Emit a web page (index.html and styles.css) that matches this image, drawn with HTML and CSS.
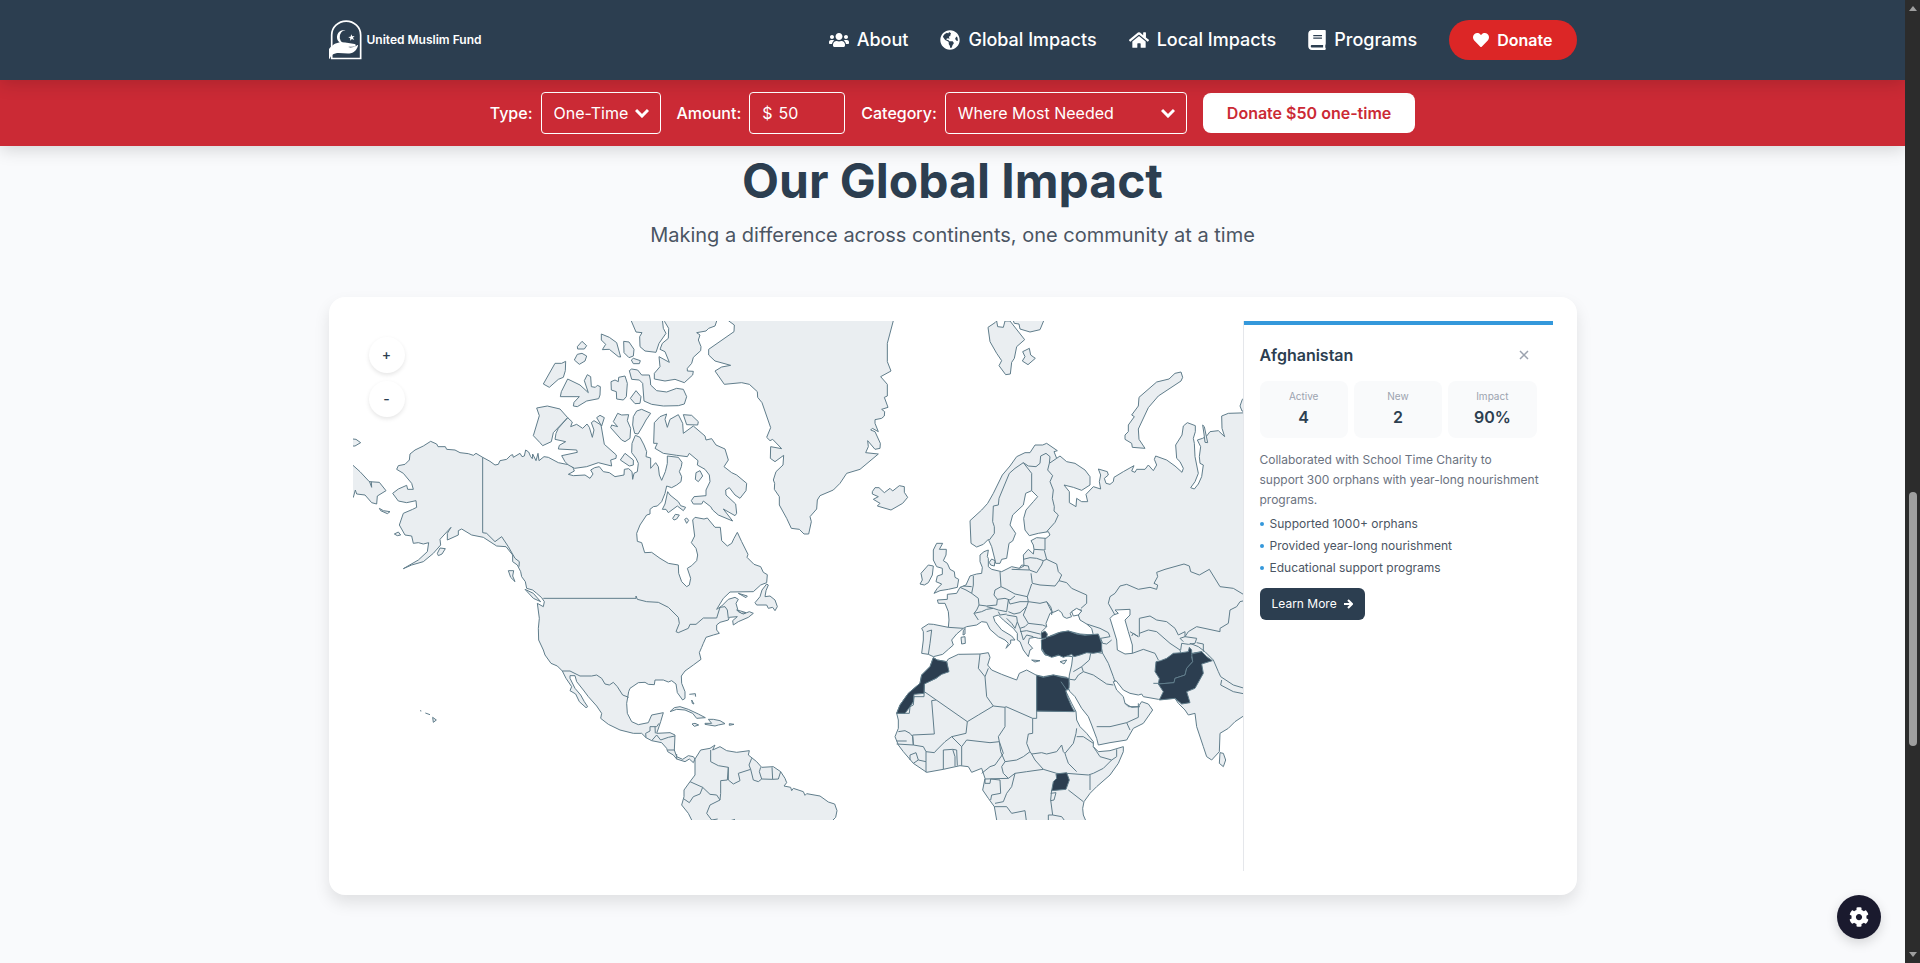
FILE: index.html
```html
<!DOCTYPE html>
<html lang="en">
<head>
    <meta charset="UTF-8">
    <meta name="viewport" content="width=device-width, initial-scale=1.0">
    <title>United Muslim Fund - Our Global Impact</title>
    <link rel="stylesheet" href="styles.css">
</head>
<body>
    <div class="page">
        <header class="site-header">
            <div class="container header-inner">
                <a class="logo" href="#">
                    <svg viewBox="0 0 98 118" aria-hidden="true">
                        <path d="M8 84V44a43 41 0 0 1 86 0v70H8V96" fill="none" stroke="#fff" stroke-width="5"/>
                        <path d="M50 30a21 21 0 1 0 6 38 17 20 0 1 1-6-38z" fill="#fff"/>
                        <path d="M66 42l3 6 7-1-5 5 4 7-7-3-5 5v-7l-6-4 7-1z" fill="#fff"/>
                        <path d="M0 86C12 72 22 66 38 66c14 0 26 4 38 5 5 1 5 7-1 7-8 1-15 0-18 2 8 3 17 0 23-3 4-3 7-5 6-1-3 12-12 22-26 23-18 1-38-6-50 4-5 4-7 9-8 12H0z" fill="#fff"/>
                    </svg>
                    <span>United Muslim Fund</span>
                </a>
                <nav class="main-nav">
                    <a href="#"><svg class="nav-icon" viewBox="0 0 640 512" aria-hidden="true"><path d="M96 224c35.3 0 64-28.7 64-64s-28.7-64-64-64-64 28.7-64 64 28.7 64 64 64zm448 0c35.3 0 64-28.7 64-64s-28.7-64-64-64-64 28.7-64 64 28.7 64 64 64zm32 32h-64c-17.6 0-33.5 7.1-45.1 18.6 40.3 22.1 68.9 62 75.1 109.4h66c17.7 0 32-14.3 32-32v-32c0-35.3-28.7-64-64-64zm-256 0c61.9 0 112-50.1 112-112S381.9 32 320 32 208 82.1 208 144s50.1 112 112 112zm76.8 32h-8.3c-20.8 10-43.9 16-68.5 16s-47.6-6-68.5-16h-8.3C179.6 288 128 339.6 128 403.2V432c0 26.5 21.5 48 48 48h288c26.5 0 48-21.5 48-48v-28.8c0-63.6-51.6-115.2-115.2-115.2zm-223.7-13.4C161.5 263.1 145.6 256 128 256H64c-35.3 0-64 28.7-64 64v32c0 17.7 14.3 32 32 32h65.9c6.3-47.4 34.9-87.3 75.2-109.4z"/></svg>About</a>
                    <a href="#"><svg class="nav-icon" viewBox="0 0 496 512" aria-hidden="true"><path d="M248 8C111.03 8 0 119.03 0 256s111.03 248 248 248 248-111.03 248-248S384.97 8 248 8zm82.29 357.6c-3.9 3.88-7.99 7.95-11.31 11.28-2.99 3-5.1 6.7-6.17 10.71-1.51 5.66-2.73 11.38-4.77 16.87l-17.39 46.85c-13.76 3-28 4.69-42.65 4.69v-27.38c1.69-12.62-7.64-36.26-22.63-51.25-6-6-9.37-14.14-9.37-22.63v-32.01c0-11.64-6.27-22.34-16.46-27.97-14.37-7.95-34.81-19.06-48.81-26.11-11.48-5.78-22.1-13.14-31.65-21.75l-.8-.72a114.792 114.792 0 0 1-18.06-20.74c-9.38-13.77-24.66-36.42-34.59-51.14 20.47-45.5 57.36-82.04 103.2-101.89l24.01 12.01C203.48 89.74 216 82.01 216 70.11v-11.3c7.99-1.29 16.12-2.11 24.39-2.42l28.3 28.3c6.25 6.25 6.25 16.38 0 22.63L264 112l-10.34 10.34c-3.12 3.12-3.12 8.19 0 11.31l4.69 4.69c3.12 3.12 3.12 8.19 0 11.31l-8 8a8.008 8.008 0 0 1-5.66 2.34h-8.99c-2.08 0-4.08.81-5.58 2.27l-9.92 9.65a8.008 8.008 0 0 0-1.58 9.31l15.59 31.19c2.66 5.32-1.21 11.58-7.15 11.58h-5.64c-1.93 0-3.79-.7-5.24-1.96l-9.28-8.06a16.017 16.017 0 0 0-15.55-3.1l-31.17 10.39a11.95 11.95 0 0 0-8.17 11.34c0 4.53 2.56 8.66 6.61 10.69l11.08 5.54c9.41 4.71 19.79 7.16 30.31 7.16s22.59 27.29 32 32h66.75c8.49 0 16.62 3.37 22.63 9.37l13.69 13.69a30.503 30.503 0 0 1 8.93 21.57 46.536 46.536 0 0 1-13.72 32.98zM417 274.25c-5.79-1.45-10.84-5-14.15-9.97l-17.98-26.97a23.97 23.97 0 0 1 0-26.62l19.59-29.38c2.32-3.47 5.5-6.29 9.24-8.15l12.98-6.49C440.2 193.59 448 223.87 448 256c0 8.67-.74 17.16-1.82 25.54L417 274.25z"/></svg>Global Impacts</a>
                    <a href="#"><svg class="nav-icon" viewBox="0 0 576 512" aria-hidden="true"><path d="M280.37 148.26L96 300.11V464a16 16 0 0 0 16 16l112.06-.29a16 16 0 0 0 15.92-16V368a16 16 0 0 1 16-16h64a16 16 0 0 1 16 16v95.64a16 16 0 0 0 16 16.05L464 480a16 16 0 0 0 16-16V300L295.67 148.26a12.19 12.19 0 0 0-15.3 0zM571.6 251.47L488 182.56V44.05a12 12 0 0 0-12-12h-56a12 12 0 0 0-12 12v72.61L318.47 43a48 48 0 0 0-61 0L4.34 251.47a12 12 0 0 0-1.6 16.9l25.5 31A12 12 0 0 0 45.15 301l235.22-193.74a12.19 12.19 0 0 1 15.3 0L530.9 301a12 12 0 0 0 16.9-1.6l25.5-31a12 12 0 0 0-1.7-16.93z"/></svg>Local Impacts</a>
                    <a href="#"><svg class="nav-icon book" viewBox="0 0 448 512" aria-hidden="true"><path d="M448 360V24c0-13.3-10.7-24-24-24H96C43 0 0 43 0 96v320c0 53 43 96 96 96h328c13.3 0 24-10.7 24-24v-16c0-7.5-3.5-14.3-8.9-18.7-4.2-15.4-4.2-59.3 0-74.7 5.4-4.3 8.9-11.1 8.9-18.6zM128 134c0-3.3 2.7-6 6-6h212c3.3 0 6 2.7 6 6v20c0 3.3-2.7 6-6 6H134c-3.3 0-6-2.7-6-6v-20zm0 64c0-3.3 2.7-6 6-6h212c3.3 0 6 2.7 6 6v20c0 3.3-2.7 6-6 6H134c-3.3 0-6-2.7-6-6v-20zm253.4 250H96c-17.7 0-32-14.3-32-32 0-17.6 14.4-32 32-32h285.4c-1.9 17.1-1.9 46.9 0 64z"/></svg>Programs</a>
                    <a class="donate-link" href="#"><svg viewBox="0 0 512 512" aria-hidden="true"><path d="M462.3 62.6C407.5 15.9 326 24.3 275.7 76.2L256 96.5l-19.7-20.3C186.1 24.3 104.5 15.9 49.7 62.6c-62.8 53.6-66.1 149.8-9.9 207.9l193.5 199.8c12.5 12.9 32.8 12.9 45.3 0l193.5-199.8c56.3-58.1 53-154.3-9.8-207.9z"/></svg>Donate</a>
                </nav>
            </div>
        </header>

        <form class="donate-bar">
            <div class="field">
                <label for="type">Type:</label>
                <div class="select-wrap type-wrap">
                    <select id="type">
                        <option>One-Time</option>
                        <option>Monthly</option>
                    </select>
                    <svg viewBox="0 0 14 10" aria-hidden="true"><path d="M1 2l6 6 6-6"/></svg>
                </div>
            </div>
            <div class="field">
                <label for="amount">Amount:</label>
                <div class="amount-wrap">
                    <span>$</span>
                    <input type="text" id="amount" value="50">
                </div>
            </div>
            <div class="field">
                <label for="category">Category:</label>
                <div class="select-wrap category-wrap">
                    <select id="category">
                        <option>Where Most Needed</option>
                        <option>Orphans</option>
                    </select>
                    <svg viewBox="0 0 14 10" aria-hidden="true"><path d="M1 2l6 6 6-6"/></svg>
                </div>
            </div>
            <button type="submit" class="donate-submit">Donate $50 one-time</button>
        </form>

        <main class="container impact">
            <h1>Our Global Impact</h1>
            <p class="subtitle">Making a difference across continents, one community at a time</p>

            <section class="map-card">
                <div class="map">
                    <svg class="world" viewBox="0 0 2670 1497" role="img" aria-label="World map">
                        <!-- Americas -->
                        <g transform="translate(-39 -63)">
                            <path d="M272 424L290 432 294 440 316 440 320 448 345 450 360 458 385 461 400 466 408 460 428 472 450 484 465 495 475 493 480 482 500 478 512 466 518 464 520 472 540 460 546 470 553 468 557 450 566 456 572 470 577 476 578 462 588 482 594 460 597 482 612 470 625 472 655 488 690 495 700 505 703 513 685 523 700 527 735 525 750 535 759 522 752 510 764 503 778 500 790 515 808 518 825 530 852 525 853 508 866 506 876 515 878 538 882 520 892 515 895 490 888 475 875 458 876 430 886 406 900 412 912 435 920 455 918 470 932 474 932 505 947 488 955 500 958 525 965 541 976 515 982 490 982 468 1015 472 1026 487 1024 500 1018 515 1025 530 1023 545 1010 555 995 563 980 558 975 580 965 605 952 618 940 620 930 628 930 642 920 645 900 675 890 700 892 724 905 728 914 758 935 757 960 775 985 790 1015 795 1016 820 1025 845 1040 860 1048 855 1052 835 1042 805 1055 797 1070 782 1073 765 1068 745 1054 728 1064 708 1058 660 1065 652 1092 657 1102 654 1125 682 1141 682 1145 722 1162 738 1175 730 1182 715 1192 697 1205 725 1224 763 1221 772 1242 793 1262 800 1270 817 1282 824 1280 848 1262 855 1240 875 1170 876 1150 895 1130 928 1145 918 1165 898 1185 892 1195 898 1188 910 1195 935 1210 942 1228 935 1240 940 1225 952 1195 965 1180 975 1178 962 1192 950 1168 952 1165 960 1140 967 1130 975 1130 990 1138 1000 1120 1005 1098 1012 1090 1030 1085 1042 1078 1058 1083 1078 1060 1095 1035 1113 1024 1128 1025 1150 1035 1175 1035 1195 1028 1200 1012 1178 1008 1152 995 1142 985 1146 970 1140 945 1140 943 1154 925 1153 915 1147 895 1148 870 1165 866 1175 860 1210 862 1240 875 1265 895 1274 925 1268 935 1245 970 1238 962 1265 957 1280 950 1300 990 1298 1005 1305 1003 1350 1010 1370 1028 1378 1045 1367 1060 1370 1065 1377 1060 1388 1048 1377 1035 1385 1010 1377 1000 1365 983 1355 980 1345 965 1328 935 1322 918 1313 905 1300 880 1300 840 1290 805 1273 782 1255 785 1240 770 1218 745 1190 730 1170 710 1145 705 1127 690 1127 690 1135 705 1165 722 1185 733 1205 743 1220 738 1223 718 1205 707 1182 690 1172 695 1160 678 1135 667 1113 652 1098 633 1090 615 1065 610 1050 596 1020 595 985 598 955 592 910 610 920 613 905 605 893 590 880 578 870 560 865 556 845 545 830 542 815 532 795 518 785 518 765 498 740 470 738 430 712 395 705 365 687 355 692 355 705 322 720 322 700 333 682 300 718 302 735 280 760 250 785 215 795 190 806 235 780 262 755 266 728 250 732 235 728 220 730 215 708 195 705 178 675 190 640 218 628 230 622 228 602 200 608 175 603 158 580 175 567 200 556 203 568 220 568 215 550 190 520 170 508 175 497 195 493 208 480 210 462 225 450 250 438Z"/>
                            <!-- Siberian tip, Aleutians, Hawaii -->
                            <path d="M20 480L39 496 60 515 88 545 118 547 138 572 112 588 110 612 95 608 75 585 50 582 46 570 40 592 20 590ZM20 415L48 418 62 428 45 438 20 438ZM88 543L95 562 94 545M118 625L130 632 150 635 142 641 122 632ZM163 702L175 696 182 705 172 707ZM292 760L300 744 316 746 306 762 295 767ZM505 812L521 812 518 828 525 845 512 832ZM555 868L580 880 602 905 580 895ZM240 1232l4 1M256 1239l14 5M278 1252L289 1260 280 1267Z"/>
                            <!-- Arctic islands -->
                            <path d="M712 140L726 124 740 137 733 147 713 147ZM703 180L712 163 726 160 740 168 735 183 718 193ZM677 184L676 212 670 232 655 238 628 262 610 252 645 190 665 190ZM784 102L808 112 830 128 842 171 835 170 808 148 787 149 797 133 784 120ZM851 124L867 126 882 148 880 168 867 173 852 158ZM874 180L880 175 901 182 898 191 880 191ZM683 237L720 255 745 278 733 242 742 224 752 230 754 260 766 262 772 256 781 260 780 285 776 296 740 303 712 320 700 318 702 307 718 290 661 290 664 275ZM813 245L825 240 835 245 836 232 855 228 862 250 859 290 850 300 830 297 829 275 814 270ZM868 212L875 207 893 210 905 225 928 225 931 240 932 255 950 272 980 276 1010 265 1030 268 1040 290 1033 312 1015 317 970 318 935 313 912 303 908 250 898 240 875 238ZM871 295L888 272 903 290 900 310 885 311ZM590 324L622 318 660 327 683 353 640 398 634 425 608 437 600 428 580 407 598 347ZM683 353L697 366 692 380 710 373 728 385 741 372 748 382 757 412 762 390 754 368 762 362 783 375 793 433 829 465 828 475 812 480 815 498 775 488 740 500 704 505 685 495 675 485 665 467 712 457 710 450 655 447 658 436 677 425 645 418 648 400 655 385ZM770 353L780 346 793 353 785 378ZM820 365L833 340 845 345 866 344 862 362 872 385 870 415 855 425 845 420 812 383 815 375 833 380ZM890 333L905 328 932 340 918 360 910 375 894 402 884 400 878 375 880 350ZM841 480L855 460 880 480 880 495 868 498ZM874 63L888 96 906 98 899 110 900 140 915 153 948 157 957 130 978 100 970 85 965 40 870 40ZM972 40L974 65 986 85 985 115 967 130 960 148 975 155 988 187 957 170 960 200 943 220 943 237 975 243 1005 238 1033 248 1058 225 1060 214 1042 213 1042 205 1055 190 1060 172 1082 152 1083 140 1075 120 1080 105 1070 98 1098 93 1106 85 1125 78 1131 60 1131 40ZM941 430L943 368 960 350 980 342 975 358 982 382 990 358 1015 344 1028 370 1030 400 1060 378 1095 408 1098 420 1115 416 1128 435 1155 447 1165 480 1152 500 1175 518 1190 525 1220 550 1218 572 1200 595 1185 585 1168 563 1157 570 1158 585 1187 612 1190 640 1185 647 1150 627 1178 663 1135 645 1118 630 1112 620 1090 603 1085 612 1060 612 1054 602 1062 590 1098 587 1098 570 1110 545 1108 525 1095 508 1072 495 1074 482 1048 460 1042 470 1010 466 970 460 945 445 952 430ZM1030 344L1055 346 1075 365 1073 375 1040 374ZM1068 518L1080 512 1088 528 1075 545 1066 538ZM983 575L990 585 1015 605 1022 617 1037 622 1030 632 1012 618 985 638 978 628 967 628 975 612ZM998 655L1006 643 1018 645 1010 657 1002 660ZM1034 658L1040 654 1046 661 1040 670Z"/>
                            <!-- Newfoundland, Greenland -->
                            <path d="M1280 852L1285 855 1278 872 1275 890 1290 888 1305 900 1312 920 1305 932 1298 922 1285 925 1280 915 1250 915 1245 908 1260 890 1266 870ZM1195 880L1222 888 1218 893ZM1190 930L1205 940 1218 938 1202 933Z"/>
                            <path d="M1165 40L1165 62 1183 75 1182 95 1106 148 1106 165 1125 183 1172 196 1145 201 1125 213 1153 253 1205 248 1228 253 1252 275 1253 292 1266 308 1292 383 1280 412 1290 422 1298 418 1325 446 1292 440 1291 475 1305 485 1331 466 1329 495 1308 515 1300 540 1304 550 1303 568 1318 590 1318 615 1340 655 1354 685 1378 688 1392 702 1406 702 1414 665 1410 650 1430 627 1432 600 1440 587 1480 570 1500 550 1520 520 1560 508 1615 462 1577 458 1585 440 1583 422 1605 448 1620 445 1621 430 1605 395 1592 390 1597 385 1615 395 1605 370 1605 359 1625 355 1633 348 1634 335 1625 328 1644 322 1633 292 1642 288 1642 253 1622 230 1653 213 1642 185 1642 130 1660 62 1664 40Z"/>
                            <!-- Caribbean -->
                            <path d="M990 1235L1003 1223 1020 1220 1045 1228 1075 1242 1096 1253 1070 1255 1058 1240 1035 1230 1010 1228ZM1048 1183L1066 1181 1067 1190M1055 1200L1062 1212 1057 1210ZM1056 1272L1065 1270 1076 1275 1063 1279ZM1095 1270L1115 1270 1105 1258 1120 1258 1140 1262 1155 1271 1135 1275 1125 1278 1095 1273ZM1168 1271L1182 1273 1168 1276Z"/>
                            <!-- South America -->
                            <path d="M1065 1377L1082 1350 1110 1345 1125 1335 1118 1350 1140 1340 1160 1352 1190 1357 1228 1352 1225 1365 1250 1385 1265 1402 1300 1400 1322 1415 1335 1435 1340 1448 1332 1458 1352 1462 1355 1472 1360 1465 1390 1475 1395 1486 1400 1481 1440 1488 1465 1506 1484 1512 1491 1532 1487 1552 1475 1564 1470 1600 1060 1600 1055 1560 1045 1540 1025 1515 1032 1490 1032 1470 1050 1445 1065 1425Z"/>
                            <!-- borders -->
                            <path class="border" d="M428 472L428 698 440 700 465 725 485 710 505 740 525 775 538 785 537 800M610 895L888 895 888 888 892 898 920 905 955 907 985 922 1015 952 1018 970 1008 995 1015 998 1045 985 1050 973 1068 973 1090 954 1130 954 1140 922 1155 920 1162 930 1165 955M667 1113L690 1113 720 1128 755 1128 770 1125 785 1135 795 1152 808 1155 820 1147 832 1160 848 1185 866 1192M918 1313L917 1300 930 1293 930 1280 950 1280 957 1270M945 1280L946 1300M935 1322L950 1305 962 1320 985 1312 1005 1308M983 1350L1003 1350M1010 1378L1010 1362M1112 1350L1112 1385 1135 1397 1165 1402 1162 1440 1142 1442 1142 1480 1140 1500 1130 1485 1110 1483 1088 1462 1050 1445M1088 1462L1080 1482 1060 1490 1048 1508 1032 1497M1165 1402L1165 1440 1180 1452 1200 1442 1195 1420 1232 1408 1227 1395 1235 1375M1232 1408L1240 1440 1255 1445 1265 1437 1258 1415 1262 1402M1265 1437L1298 1438 1296 1402M1298 1438L1315 1437 1322 1415M1140 1500L1110 1515 1100 1540 1115 1560 1133 1557M1168 1563L1185 1558"/>
                        </g>
                        <!-- Europe and Asia -->
                        <g transform="translate(1521 -33)">
                            <path d="M1170 308L1105 310 1085 318 1086 355 1094 380 1075 362 1050 365 1040 378 1028 385 1012 390 1022 410 1018 440 1020 460 1030 465 1025 500 1015 522 1003 537 992 533 1005 515 1015 490 1010 465 1005 440 1003 400 1000 385 1006 365 1006 347 982 338 970 348 966 375 947 405 950 445 960 455 970 475 966 487 945 468 920 450 887 438 883 448 890 465 880 482 865 465 855 478 830 478 825 487 815 483 822 467 790 485 762 502 760 515 750 523 738 520 733 505 745 495 742 485 715 477 722 495 718 515 722 537 700 530 678 553 683 575 665 575 650 565 648 590 628 578 628 545 612 525 640 532 665 541 690 525 690 500 675 480 645 460 620 455 600 438 590 445 582 425 592 422 560 400 548 405 525 405 510 428 495 428 470 440 450 468 427 495 400 550 383 580 365 600 330 632 333 700 350 711 370 703 385 688 395 710 405 750 407 760 420 760 425 748 440 745 447 700 458 693 467 670 450 645 458 615 490 585 497 550 515 542 533 560 520 575 498 600 491 625 495 660 508 677 535 670 565 665 570 675 558 685 530 683 513 692 520 705 522 718 520 732 505 718 490 735 492 768 478 775 455 770 425 785 395 778 385 770 385 745 382 740 385 720 372 725 360 735 360 755 367 772 365 790 350 792 330 798 318 825 300 832 290 850 262 853 262 868 232 870 235 880 255 880 265 905 267 930 265 952 220 943 205 942 185 955 190 965 190 990 185 1030 205 1033 220 1040 248 1033 265 1018 280 1005 275 990 290 972 310 955 320 950 350 945 365 935 380 937 390 958 415 980 435 990 445 1000 438 1015 452 1000 452 990 465 990 455 978 425 960 405 935 400 920 415 915 430 930 460 955 472 970 472 990 480 995 490 1020 505 1040 510 1020 518 1015 505 1000 508 985 525 982 535 985 545 985 545 965 560 950 558 940 570 910 585 905 595 900 605 908 610 920 620 925 635 920 630 910 645 898 665 900 655 915 660 930 680 942 695 955 700 975 660 972 625 963 595 968 570 978 560 985 545 992 545 1020 555 1035 580 1040 600 1035 620 1038 638 1040 635 1065 628 1095 625 1135 630 1145 645 1160 665 1195 685 1220 695 1245 710 1285 715 1305 750 1298 800 1290 820 1255 850 1240 878 1200 865 1182 845 1175 835 1190 805 1190 795 1180 790 1160 770 1140 760 1115 768 1112 790 1140 810 1150 835 1155 845 1152 850 1160 895 1168 945 1165 955 1180 975 1200 985 1215 1005 1210 1010 1250 1030 1310 1040 1340 1055 1350 1078 1325 1080 1270 1105 1255 1125 1235 1170 1205Z"/>
                            <path d="M1170 250L1147 268 1140 288 1146 303 1170 308ZM1028 345L1033 350 1043 398 1035 397 1032 372ZM963 186L968 202 963 213 895 258 865 293 835 357 837 388 855 415 817 412 815 400 795 388 795 375 805 365 805 345 823 320 815 315 835 288 837 262 890 216 927 207 945 190ZM410 33L413 50 430 52 435 33 450 33 494 89 470 110 463 145 455 157 451 192 437 194 417 167 425 152 410 130 390 95 384 52 405 38ZM455 20L463 40 477 42 480 57 510 66 540 59 552 30 552 10ZM488 125L508 115 512 135 526 145 504 164 487 153 495 140ZM37 545L45 533 57 533 73 548 90 535 98 543 118 527 133 530 133 547 143 562 128 580 93 600 52 588 60 580 40 568 55 560 37 552Z"/>
                            <!-- British Isles, Denmark -->
                            <path d="M230 700L248 700 238 718 259 718 258 735 250 752 262 760 270 778 283 785 285 802 296 808 292 832 265 838 240 842 222 850 232 835 245 822 228 815 232 798 247 793 247 775 230 770 220 750 220 720ZM180 822L187 810 183 790 205 765 220 768 217 795 205 818 193 825ZM388 757L395 747 405 752 403 768 392 765Z"/>
                            <path d="M352 1040L382 1040 378 1060 350 1048ZM310 962L315 955 315 972 309 975ZM303 982L315 980 316 1000 305 1002ZM515 1050L540 1052 525 1056ZM600 1055L620 1050 612 1062ZM1080 1328L1090 1330 1097 1350 1090 1370 1078 1360Z"/>
                            <path class="water" d="M765 900L810 898 810 915 795 930 805 965 817 1005 817 1030 795 1032 772 1020 770 990 750 925 760 915 775 910ZM635 905L650 895 665 903 655 915 640 918Z"/>
                            <path class="border" d="M388 690L403 670 403 650 398 635 400 588 415 585 417 565 448 490 465 475 490 458 515 490 515 542M490 458L505 468 528 470 540 460 542 438 558 430 570 440 568 460 590 445M568 460L563 480 578 497 570 515 580 540 577 565 583 590 582 603 595 615 585 637 560 665M555 685L555 720 522 718M490 748L510 743 530 745 550 752 560 748 553 722M478 775L485 765 505 768 508 780 455 778M508 780L530 788 545 765 550 752M560 748L590 762 595 785 605 795 597 812 585 828 540 825 517 820 513 790M597 812L620 818 635 835 680 855 680 880 663 895M420 785L423 830 405 840 402 855 412 868 410 885 380 888 357 885 355 865 335 850 340 825 340 798M423 830L440 838 465 852 502 860 515 822M412 868L435 865 450 870 465 858M502 860L505 875 480 875 450 882 445 870M300 832L318 840 335 850M310 828L335 830M357 885L350 900 342 910 355 930M342 910L365 905 380 898 400 895 415 900 440 905 445 870M445 905L462 912 480 908 500 890 505 875 540 880 560 875 575 905 575 915M500 890L490 915 505 940 548 945 560 950M380 890L400 895M415 905L420 915 440 912M440 915L470 920 472 935 465 955 455 940 440 925M472 935L480 955 490 990M480 955L495 950 505 940M480 965L500 962 540 972M490 990L500 975 520 980M560 875L572 890 578 910M200 965L215 960 210 1000 205 1033M265 952L310 955M680 942L720 955 745 968 750 980 722 985 700 975M722 985L728 1000 740 1002 755 990M722 1005L728 1030 745 1060 760 1100 765 1115M700 975L718 995 722 1005M728 1030L700 1025 670 1028 645 1038M692 1030L688 1050 665 1070 640 1085M665 1070L670 1085 655 1095 645 1110 630 1108M670 1085L700 1095 740 1122 760 1125M817 1030L850 1018 885 1030 895 1050M880 1120L940 1120 955 1100 990 1060M990 1000L1015 1010 1035 1025 1060 1050 1075 1085 1082 1100 1120 1125 1170 1140M1085 1110L1082 1125 1120 1145 1170 1155M765 915L745 880 750 860 765 850 780 828 800 823 835 838 870 832 890 838 893 825 882 820 893 800 890 787 915 778 972 762 988 768 992 785 1018 795 1048 778 1080 830 1120 835 1150 853 1170 853M1170 868L1140 875 1130 890 1110 900 1105 940 1080 955 1080 965 1010 950 985 965 975 980M838 980L838 925 870 918 890 930 920 935 945 955 955 975 975 965 975 980 960 985 970 995M838 970L865 960 890 965 930 1000 960 1020 962 1028M810 965L835 980 820 970 815 978M975 980L1010 985 1005 1000 985 1003 965 1000 962 1020M1010 998L1030 1002 1030 1025M710 1250L750 1250 800 1238 835 1222 835 1180M800 1238L810 1260M795 1180L815 1192 840 1190"/>
                        </g>
                        <!-- Africa and countries with active programs -->
                        <g transform="translate(1581 717)">
                            <path d="M160 293L172 300 200 305 205 297 235 283 300 282 325 278 330 292 323 315 335 330 365 343 410 360 418 340 440 330 468 345 490 350 520 345 560 352 568 370 565 390 555 388 545 368 575 430 588 455 590 480 600 500 620 520 640 545 640 560 655 575 690 572 730 560 730 575 715 610 690 645 650 680 630 700 612 725 608 745 610 765 625 800 350 800 350 780 343 740 325 715 308 690 315 655 305 625 275 637 265 620 240 617 190 628 140 637 100 610 70 575 55 555 45 530 55 505 55 480 50 460 60 435 85 400 120 370 125 345 150 320Z"/>
                            <path class="border" d="M50 460L88 460 90 440 100 435 102 410 132 410 133 370 168 355 185 340 205 335 200 305M133 395L262 485 258 520 215 530 195 545 170 570 163 578 138 575 130 560 100 555 98 525 163 522 155 422 168 420M262 485L295 465 340 438 320 410 315 350 295 325 300 282M315 350L325 325M340 438L375 442 378 440 458 475 458 520 445 522 440 550 450 575 430 590 410 600 375 605 362 575 358 545 330 548 260 540 245 560 215 530M375 442L375 500 355 530 358 545M458 475L470 475 470 350M470 453L588 453M55 515L75 512 90 520 98 530 100 555 50 552M50 543L80 543M90 600L90 585 108 578 115 600 100 610M115 600L138 605 138 637M138 575L138 605M190 628L190 570 218 568 225 590 225 618M232 617L230 570 218 568M245 617L245 560M358 545L370 580 345 615 330 620 305 640M375 605L365 620 370 640 385 655 315 657M385 655L405 640 440 635 490 628 530 640 555 642 560 640 625 645 640 640 670 625 695 600 710 590 710 568M490 628L465 600 455 582 450 575M455 582L485 578 500 582 530 575 545 555 550 575 555 580 558 590 565 610 590 635M555 580L580 550 588 520 590 505M590 530L610 530 640 550M640 560L650 575 660 590 695 600M630 645L630 690M565 690L610 725M515 690L512 720 518 765 505 765 505 790M518 765L545 770 560 790M512 700L528 698 522 720 512 722M405 640L395 680 380 700 370 725 345 730M343 740L380 740 395 760 435 752 440 790M315 657L315 670 330 670 332 657 360 660 362 700 335 705 332 720"/>
                            <g class="active">
                                <path d="M160 293L172 300 200 305 207 335 185 343 168 355 133 372 132 400 102 403 100 425 90 440 75 460 50 460 60 435 85 400 120 370 125 345 150 320Z"/>
                                <path d="M470 346L490 352 520 345 545 352 567 355 567 385 557 392 562 410 575 440 583 455 470 453Z"/>
                                <path d="M528 642L560 638 568 660 558 688 515 692 520 665 530 655Z"/>
                                <path d="M483 220L495 213 502 222 500 232 520 226 540 217 565 213 590 222 615 226 655 222 665 250 665 275 640 280 620 278 600 285 582 290 575 283 550 292 535 285 515 292 495 282 485 265 484 240 498 234 485 236Z"/>
                                <path d="M828 305L842 302 860 295 880 280 905 278 925 275 928 262 935 270 935 280 965 275 970 285 935 290 938 305 920 325 915 345 885 355 882 368 835 372 838 355 825 335Z"/>
                                <path d="M935 282L965 275 980 290 997 302 965 312 970 340 945 385 920 395 930 428 905 432 885 415 838 420 850 395 835 372 882 368 885 355 915 345 920 325 938 305Z"/>
                                <path class="border" d="M543 365L560 390"/>
                            </g>
                        </g>
                    </svg>
                    <div class="zoom-controls">
                        <button type="button" aria-label="Zoom in">+</button>
                        <button type="button" aria-label="Zoom out">-</button>
                    </div>
                </div>

                <aside class="country-panel">
                    <div class="panel-header">
                        <h2>Afghanistan</h2>
                        <button type="button" class="close-btn" aria-label="Close"><svg viewBox="0 0 10 10" aria-hidden="true"><path d="M1 1l8 8M9 1L1 9"/></svg></button>
                    </div>
                    <dl class="stats">
                        <div><dt>Active</dt><dd>4</dd></div>
                        <div><dt>New</dt><dd>2</dd></div>
                        <div><dt>Impact</dt><dd>90%</dd></div>
                    </dl>
                    <p class="description">Collaborated with School Time Charity to<br>support 300 orphans with year-long nourishment programs.</p>
                    <ul class="highlights">
                        <li>Supported 1000+ orphans</li>
                        <li>Provided year-long nourishment</li>
                        <li>Educational support programs</li>
                    </ul>
                    <a class="learn-more" href="#">Learn More <svg viewBox="0 0 10 10" aria-hidden="true"><path d="M1 5h8M5 1l4 4-4 4"/></svg></a>
                </aside>
            </section>
        </main>

        <button type="button" class="settings-btn" aria-label="Settings">
            <svg viewBox="0 0 512 512" aria-hidden="true"><path d="M487.4 315.7l-42.6-24.6c4.3-23.2 4.3-47 0-70.2l42.6-24.6c4.9-2.8 7.1-8.6 5.5-14-11.1-35.6-30-67.8-54.7-94.6-3.8-4.1-10-5.1-14.8-2.3L380.8 110c-17.9-15.4-38.5-27.3-60.8-35.1V25.8c0-5.6-3.9-10.5-9.4-11.7-36.7-8.2-74.3-7.8-109.2 0-5.5 1.2-9.4 6.1-9.4 11.7V75c-22.2 7.9-42.8 19.8-60.8 35.1L88.7 85.5c-4.9-2.8-11-1.9-14.8 2.3-24.7 26.7-43.6 58.9-54.7 94.6-1.7 5.4.6 11.2 5.5 14L67.3 221c-4.3 23.2-4.3 47 0 70.2l-42.6 24.6c-4.9 2.8-7.1 8.6-5.5 14 11.1 35.6 30 67.8 54.7 94.6 3.8 4.1 10 5.1 14.8 2.3l42.6-24.6c17.9 15.4 38.5 27.3 60.8 35.1v49.2c0 5.6 3.9 10.5 9.4 11.7 36.7 8.2 74.3 7.8 109.2 0 5.5-1.2 9.4-6.1 9.4-11.7v-49.2c22.2-7.9 42.8-19.8 60.8-35.1l42.6 24.6c4.9 2.8 11 1.9 14.8-2.3 24.7-26.7 43.6-58.9 54.7-94.6 1.5-5.5-.7-11.3-5.6-14.1zM256 336c-44.1 0-80-35.9-80-80s35.9-80 80-80 80 35.9 80 80-35.9 80-80 80z"/></svg>
        </button>
    </div>

    <div class="scrollbar" aria-hidden="true">
        <span class="arrow up"></span>
        <div class="track"><span class="thumb"></span></div>
        <span class="arrow down"></span>
    </div>
</body>
</html>
```

FILE: styles.css
```css
* {
    box-sizing: border-box;
    margin: 0;
    padding: 0;
}

body {
    font-family: Inter, "Liberation Sans", sans-serif;
    font-size: 16px;
    line-height: 24px;
    color: #2c3e50;
    background-color: #f9fafc;
    display: grid;
    grid-template-columns: 1fr 15px;
    height: 100vh;
    overflow: hidden;
}

a {
    color: inherit;
    text-decoration: none;
}

button,
input,
select {
    font: inherit;
}

button {
    border: none;
    cursor: pointer;
}

.page {
    height: 100vh;
    overflow: hidden;
}

.container {
    max-width: 1280px;
    margin: 0 auto;
    padding: 0 16px;
}

/* Header */
.site-header {
    position: relative;
    z-index: 2;
    background-color: #2c3e50;
    color: #fff;
    box-shadow: 0 4px 16px rgba(0, 0, 0, 0.15);
}

.header-inner {
    display: flex;
    align-items: center;
    justify-content: space-between;
    height: 80px;
}

.logo {
    display: flex;
    align-items: center;
    gap: 5px;
    font-size: 12px;
    font-weight: 600;
}

.logo svg {
    width: 33px;
    height: 40px;
}

.main-nav {
    display: flex;
    align-items: center;
    gap: 32px;
    font-size: 18px;
    font-weight: 500;
}

.main-nav a {
    display: flex;
    align-items: center;
    gap: 8px;
}

.main-nav svg {
    fill: currentColor;
}

.nav-icon {
    width: 20px;
    height: 20px;
}

.nav-icon.book {
    width: 18px;
}

.main-nav .donate-link {
    height: 40px;
    padding: 0 24px;
    border-radius: 20px;
    background-color: #dc2626;
    font-size: 16px;
    font-weight: 600;
}

.donate-link svg {
    width: 16px;
    height: 16px;
}

/* Donation bar */
.donate-bar {
    position: relative;
    z-index: 1;
    display: flex;
    align-items: center;
    justify-content: center;
    gap: 16px;
    padding: 12px 16px;
    background-color: #cb2a35;
    color: #fff;
    box-shadow: 0 4px 16px rgba(0, 0, 0, 0.15);
}

.field {
    display: flex;
    align-items: center;
    gap: 8px;
    font-weight: 500;
}

.select-wrap {
    display: grid;
    align-items: center;
    font-weight: 400;
}

.select-wrap select,
.select-wrap svg {
    grid-area: 1 / 1;
}

.select-wrap select {
    appearance: none;
    width: 100%;
    height: 42px;
    padding: 0 12px;
    border: 1px solid #fff;
    border-radius: 4px;
    background-color: transparent;
    color: #fff;
}

.select-wrap option {
    color: #2c3e50;
}

.select-wrap svg {
    justify-self: end;
    width: 14px;
    height: 10px;
    margin-right: 12px;
    fill: none;
    stroke: #fff;
    stroke-width: 3;
    pointer-events: none;
}

.type-wrap {
    width: 120px;
}

.category-wrap {
    width: 242px;
}

.amount-wrap {
    display: flex;
    align-items: center;
    gap: 6px;
    width: 96px;
    height: 42px;
    padding: 0 12px;
    border: 1px solid #fff;
    border-radius: 4px;
    font-weight: 400;
}

.amount-wrap input {
    width: 100%;
    border: none;
    outline: none;
    background-color: transparent;
    color: #fff;
}

.donate-submit {
    height: 40px;
    padding: 0 24px;
    border-radius: 8px;
    background-color: #fff;
    color: #cb2a35;
    font-weight: 600;
}

/* Impact section */
.impact {
    padding-top: 11px;
}

.impact h1 {
    font-size: 48px;
    line-height: 48px;
    font-weight: 700;
    text-align: center;
    margin-bottom: 16px;
}

.subtitle {
    font-size: 20px;
    line-height: 28px;
    text-align: center;
    color: #4b5563;
    margin-bottom: 48px;
}

.map-card {
    display: grid;
    grid-template-columns: 1fr 310px;
    min-height: 598px;
    padding: 24px;
    border-radius: 16px;
    background-color: #fff;
    box-shadow: 0 8px 16px rgba(0, 0, 0, 0.1);
}

.map {
    position: relative;
}

.world {
    display: block;
    width: 100%;
    height: auto;
    overflow: hidden;
}

.world path {
    fill: #eaeef1;
    stroke: #607d8b;
    stroke-width: 3;
    stroke-linejoin: round;
}

.world .water {
    fill: #fff;
}

.world .border {
    fill: none;
}

.world .active path {
    fill: #2c3e50;
}

.zoom-controls {
    position: absolute;
    top: 16px;
    left: 16px;
    display: flex;
    flex-direction: column;
    gap: 8px;
}

.zoom-controls button {
    width: 36px;
    height: 36px;
    border-radius: 50%;
    background-color: #fff;
    color: #2c3e50;
    font-size: 14px;
    font-weight: 500;
    box-shadow: 0 2px 4px rgba(0, 0, 0, 0.1);
}

/* Country panel */
.country-panel {
    border-left: 1px solid #e5e7eb;
    padding: 0 16px;
    font-size: 12px;
}

.panel-header {
    display: flex;
    align-items: center;
    justify-content: space-between;
    height: 60px;
    margin: 0 -16px;
    padding: 4px 24px 0 16px;
    border-top: 4px solid #3498db;
}

.panel-header h2 {
    font-size: 16px;
    font-weight: 600;
}

.close-btn {
    width: 10px;
    height: 10px;
    display: flex;
    background-color: transparent;
}

.close-btn svg {
    width: 10px;
    height: 10px;
    stroke: #9ca3af;
    stroke-width: 1.5;
}

.stats {
    display: grid;
    grid-template-columns: repeat(3, 1fr);
    gap: 6px;
    margin-bottom: 12px;
}

.stats div {
    padding: 8px;
    border-radius: 8px;
    background-color: #f9fafb;
    text-align: center;
}

.stats dt {
    font-size: 10px;
    line-height: 15px;
    color: #9ca3af;
}

.stats dd {
    font-size: 16px;
    line-height: 26px;
    font-weight: 600;
}

.description {
    line-height: 20px;
    color: #6b7280;
    margin-right: -8px;
    margin-bottom: 5px;
}

.highlights {
    display: flex;
    flex-direction: column;
    gap: 4px;
    list-style: none;
    line-height: 18px;
    color: #4b5563;
    margin-bottom: 11px;
}

.highlights li {
    display: flex;
    align-items: center;
    gap: 6px;
}

.highlights li::before {
    content: "";
    width: 4px;
    height: 4px;
    border-radius: 50%;
    background-color: #3498db;
}

.learn-more {
    display: inline-flex;
    align-items: center;
    gap: 6px;
    height: 32px;
    padding: 0 12px;
    border-radius: 6px;
    background-color: #2c3e50;
    color: #fff;
}

.learn-more svg {
    width: 10px;
    height: 10px;
    fill: none;
    stroke: #fff;
    stroke-width: 2;
}

/* Floating settings button */
.settings-btn {
    position: fixed;
    right: 39px;
    bottom: 24px;
    display: flex;
    align-items: center;
    justify-content: center;
    width: 44px;
    height: 44px;
    border-radius: 50%;
    background-color: #1a1a2e;
    box-shadow: 0 4px 12px rgba(0, 0, 0, 0.15);
}

.settings-btn svg {
    width: 20px;
    height: 20px;
    fill: #fff;
}

/* Scrollbar */
.scrollbar {
    display: flex;
    flex-direction: column;
    align-items: center;
    justify-content: space-between;
    padding: 6px 0;
    background-color: #2c2c2c;
}

.track {
    flex: 1;
    display: grid;
    grid-template-rows: 478fr 253fr 205fr;
}

.thumb {
    grid-row: 2;
    width: 8px;
    border-radius: 4px;
    background-color: #9f9f9f;
}

.arrow {
    border: 4px solid transparent;
}

.up {
    border-top: none;
    border-bottom: 5px solid #9f9f9f;
}

.down {
    border-bottom: none;
    border-top: 5px solid #9f9f9f;
}
```
